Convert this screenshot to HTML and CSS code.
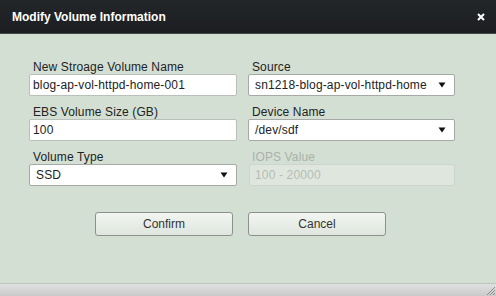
FILE: index.html
```html
<!DOCTYPE html>
<html>
<head>
<meta charset="utf-8">
<link rel="stylesheet" href="styles.css">
</head>
<body>
<div class="dialog">
  <div class="titlebar">
    <span class="title">Modify Volume Information</span>
    <svg class="close" width="8" height="8" viewBox="0 0 8 8"><path d="M1 1L7 7M7 1L1 7" stroke="#fff" stroke-width="2"/></svg>
  </div>
  <div class="content">
    <div class="grid">
      <div class="field">
        <label class="label">New Stroage Volume Name</label>
        <div class="input">blog-ap-vol-httpd-home-001</div>
      </div>
      <div class="field">
        <label class="label">Source</label>
        <div class="select"><span class="val">sn1218-blog-ap-vol-httpd-home</span><svg class="arrow" width="8" height="6" viewBox="0 0 8 6"><path d="M0.5 0.5H7.5L4 5.5Z" fill="#111"/></svg></div>
      </div>
      <div class="field">
        <label class="label">EBS Volume Size (GB)</label>
        <div class="input">100</div>
      </div>
      <div class="field">
        <label class="label">Device Name</label>
        <div class="select"><span class="val">/dev/sdf</span><svg class="arrow" width="8" height="6" viewBox="0 0 8 6"><path d="M0.5 0.5H7.5L4 5.5Z" fill="#111"/></svg></div>
      </div>
      <div class="field">
        <label class="label">Volume Type</label>
        <div class="select"><span class="val">SSD</span><svg class="arrow" width="8" height="6" viewBox="0 0 8 6"><path d="M0.5 0.5H7.5L4 5.5Z" fill="#111"/></svg></div>
      </div>
      <div class="field disabled">
        <label class="label">IOPS Value</label>
        <div class="input">100 - 20000</div>
      </div>
    </div>
    <div class="buttons">
      <button class="btn">Confirm</button>
      <button class="btn">Cancel</button>
    </div>
  </div>
  <div class="footer">
    <svg class="grip" width="12" height="12" viewBox="0 0 12 12"><path d="M11 3L3 11M11 6L6 11M11 9L9 11" stroke="#8a8a8a" stroke-width="1"/></svg>
  </div>
</div>
</body>
</html>
```

FILE: styles.css
```css
html, body {
  margin: 0;
  padding: 0;
}
body {
  font-family: "Liberation Sans", Arial, sans-serif;
  font-size: 12px;
  color: #222;
  width: 496px;
  height: 296px;
  overflow: hidden;
}
.dialog {
  display: flex;
  flex-direction: column;
  height: 296px;
  background: #d4dfd3;
}
.titlebar {
  height: 33px;
  background: linear-gradient(#232629, #1c1e21);
  border-bottom: 1px solid #44484b;
  display: flex;
  align-items: center;
  justify-content: space-between;
  padding: 0 11px 0 12px;
  box-sizing: content-box;
}
.title {
  color: #fff;
  font-weight: bold;
  font-size: 12px;
  line-height: 14px;
  padding-top: 1px;
}
.close {
  display: block;
}
.content {
  flex: 1;
  padding: 26px 41px 0 29px;
}
.grid {
  display: grid;
  grid-template-columns: 208px 207px;
  column-gap: 11px;
  row-gap: 9px;
}
.field {
  display: flex;
  flex-direction: column;
}
.label {
  line-height: 14px;
  padding-left: 4px;
  color: #222;
  letter-spacing: 0.12px;
}
.input {
  height: 22px;
  box-sizing: border-box;
  background: #fff;
  border: 1px solid #b9bfb9;
  border-radius: 2px;
  padding: 0 3px;
  line-height: 20px;
  white-space: nowrap;
  overflow: hidden;
  letter-spacing: 0.15px;
}
.select {
  height: 22px;
  box-sizing: border-box;
  background: #fff;
  border: 1px solid #a6aaa6;
  border-radius: 2px;
  display: flex;
  align-items: center;
  padding: 0 8px 0 6px;
  gap: 8px;
  letter-spacing: 0.15px;
}
.select .val {
  flex: 1;
  white-space: nowrap;
  line-height: 20px;
}
.arrow {
  flex: none;
  display: block;
}
.disabled .label {
  color: #a9b2a9;
}
.disabled .input {
  background: #dfe6de;
  border-color: #cdd5cc;
  color: #b5bdb4;
  margin-left: 1px;
  padding-left: 5px;
}
.buttons {
  display: flex;
  gap: 15px;
  margin-top: 26px;
  padding-left: 66px;
}
.btn {
  width: 138px;
  height: 24px;
  font-family: "Liberation Sans", Arial, sans-serif;
  font-size: 12px;
  color: #333;
  background: linear-gradient(#f2f5f1, #dfe6de);
  border: 1px solid #8c918c;
  border-radius: 3px;
  padding: 0;
}
.footer {
  height: 12px;
  border-top: 1px solid #bfc4bf;
  background: linear-gradient(#e0e0e0, #cacaca);
  display: flex;
  justify-content: flex-end;
  align-items: flex-end;
}
.grip {
  display: block;
}
```
